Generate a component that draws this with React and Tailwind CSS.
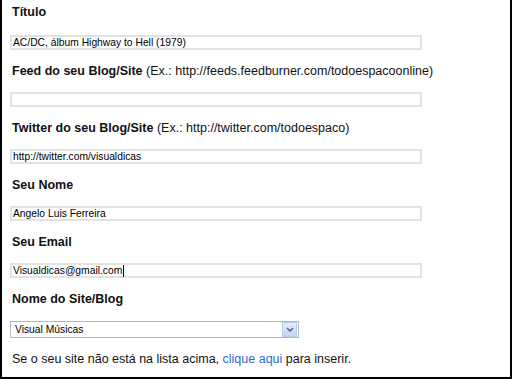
const FIELDS = [
  { label: 'Título', value: 'AC/DC, álbum Highway to Hell (1979)' },
  { label: 'Feed do seu Blog/Site', hint: '(Ex.: http://feeds.feedburner.com/todoespacoonline)', value: '' },
  { label: 'Twitter do seu Blog/Site', hint: '(Ex.: http://twitter.com/todoespaco)', value: 'http://twitter.com/visualdicas' },
  { label: 'Seu Nome', value: 'Angelo Luis Ferreira' },
  { label: 'Seu Email', value: 'Visualdicas@gmail.com', caret: true },
];

function Label({ text, hint }) {
  return (
    <div className="h-[16px] pl-[10px] text-[12.5px] leading-[16px] text-[#111] whitespace-nowrap">
      <span className="font-bold">{text}</span>
      {hint && <span> {hint}</span>}
    </div>
  );
}

function TextBox({ value, caret, first }) {
  return (
    <div
      className={`ml-[8px] ${first ? 'mt-[15px]' : 'mt-[13px]'} mb-[13px] flex items-center w-[412px] h-[15px] border-2 border-[#e2e2e2] bg-white px-[1px] text-[10.3px] leading-[11px] text-black`}
    >
      <span>{value}</span>
      {caret && <span className="ml-[1px] w-px h-[12px] bg-black" />}
    </div>
  );
}

export default function App() {
  return (
    <div className="w-[512px] h-[379px] bg-white border-x-2 border-b-2 border-black pt-[4px] font-['Liberation_Sans',Arial,sans-serif]">
      {FIELDS.map((f, i) => (
        <div key={f.label}>
          <Label text={f.label} hint={f.hint} />
          <TextBox value={f.value} caret={f.caret} first={i === 0} />
        </div>
      ))}

      <Label text="Nome do Site/Blog" />
      <div className="ml-[8px] mt-[14px] flex items-center w-[289px] h-[17px] border border-[#a9b8cc] bg-white">
        <span className="flex-1 pl-[4px] text-[10.3px] leading-[11px] text-black">Visual Músicas</span>
        <span className="flex items-center justify-center w-[15px] h-[15px] mr-px border border-[#b8cbe8] bg-gradient-to-b from-[#e3ecfb] to-[#c4d5f2]">
          <svg width="8" height="5" viewBox="0 0 8 5">
            <path d="M1 1L4 4L7 1" fill="none" stroke="#4d6185" strokeWidth="1.5" />
          </svg>
        </span>
      </div>

      <div className="mt-[13px] pl-[10px] text-[12.5px] leading-[16px] text-[#111] whitespace-nowrap">
        Se o seu site não está na lista acima, <span className="text-[#2a6ed2]">clique aqui</span> para inserir.
      </div>
    </div>
  );
}
